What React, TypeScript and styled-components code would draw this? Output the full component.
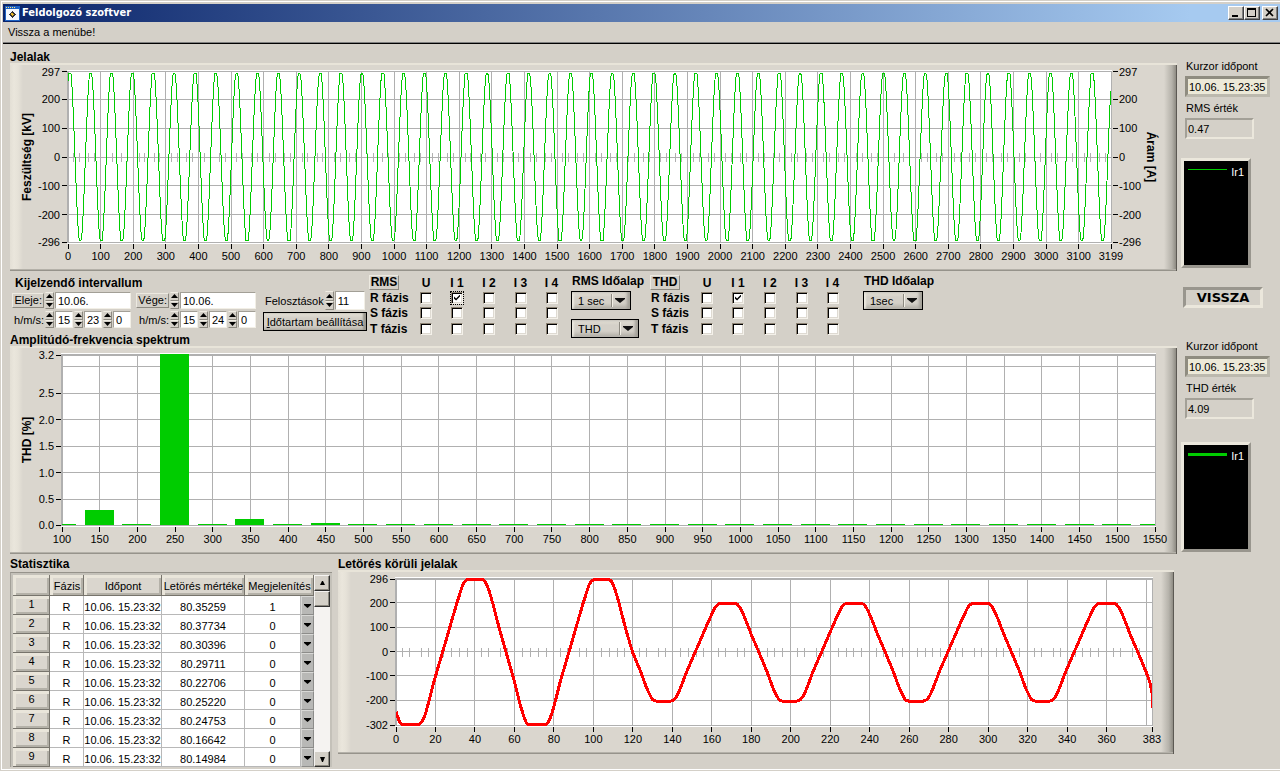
import React, { useId } from "react";
import styled, { createGlobalStyle } from "styled-components";

const face = "#d4d0c8";
const panelFace = "#dad6ce";
const gridGray = "#b0b0b0";
const green = "#00cc00";
const sans = '"Liberation Sans", Arial, sans-serif';

const GlobalStyle = createGlobalStyle`
  * { box-sizing: border-box; }
  body { margin: 0; background: ${face}; color: #000; font: 11px/14px ${sans}; display: flow-root; }
  button, input, select { font: inherit; color: inherit; margin: 0; padding: 0; border-radius: 0; }
`;

/* ---------- window frame ---------- */

const Window = styled.div`
  display: flex;
  flex-direction: column;
  min-height: calc(100vh - 2px);
  margin: 1px 0 1px 1px;
  padding: 2px 0 0 1px;
  border: 1px solid #fff;
  border-right: 0;
`;

const TitleBar = styled.header`
  display: flex;
  align-items: center;
  gap: 2px;
  height: 18px;
  padding: 0 2px;
  background: linear-gradient(to right, #0a246a, #a6caf0 93%);
  color: #fff;
`;

const WindowTitle = styled.h1`
  flex: 1;
  margin: 0;
  font: bold 11px/18px "DejaVu Sans Condensed", "DejaVu Sans", sans-serif;
`;

const WindowButtons = styled.div`
  display: flex;
`;

const WindowButton = styled.button<{ $apart?: boolean }>`
  display: grid;
  place-items: center;
  width: 16px;
  height: 14px;
  margin-left: ${(p) => (p.$apart ? 2 : 0)}px;
  background: ${face};
  border: 1px solid;
  border-color: #fff #404040 #404040 #fff;
  box-shadow: inset -1px -1px #808080;
`;

const MenuBar = styled.nav`
  height: 22px;
  padding: 3px 5px;
  border-bottom: 1px solid #000;
  box-shadow: inset 0 -1px #808080;
`;

const MenuItem = styled.button`
  background: none;
  border: 0;
`;

const Body = styled.main`
  display: flex;
  flex: 1;
  padding-left: 7px;
`;

const MainColumn = styled.div`
  flex: 1;
  min-width: 0;
  padding-top: 7px;
`;

const SideColumn = styled.aside`
  display: flex;
  flex-direction: column;
  align-items: flex-start;
  width: 103px;
  padding: 15px 0 0 4px;
`;

const Heading = styled.h2`
  margin: 0;
  font: bold 12px/12px ${sans};
  white-space: nowrap;
`;

/* ---------- chart ---------- */

const ChartPanel = styled.div<{ $left: number; $right: number }>`
  padding: 8px ${(p) => p.$right}px 28px ${(p) => p.$left}px;
  background:
    linear-gradient(to right, #e3dfd5, #eae6dc 4px, #e6e2d8 8px, ${panelFace}) left / 13px 100% no-repeat,
    linear-gradient(to right, ${panelFace}, #b5b2aa 60%, #85827a) right / 13px 100% no-repeat,
    ${panelFace};
  box-shadow: inset 0 2px #e8e4d9, inset -1px 0 #5c5953, inset 0 -1px #96938b, inset 0 -2px #b4b1a9;
`;

const Plot = styled.svg<{ $height: number }>`
  display: block;
  width: 100%;
  height: ${(p) => p.$height}px;
  overflow: visible;
  background: #fff;
  box-shadow: 0 0 0 1px #fff;
  shape-rendering: crispEdges;
  font: 11px ${sans};
`;

const AxisTitle = styled.text`
  font: bold 12px ${sans};
`;

type Tick = { at: number; label?: string };

type ChartProps = {
  name: string;
  height: number;
  left: number;
  right: number;
  x: [number, number];
  y: [number, number];
  xTicks: Tick[];
  yTicks: Tick[];
  minor?: number[];
  axisTitle?: string;
  rightAxisTitle?: string;
  children: (toX: (v: number) => number, toY: (v: number) => number) => React.ReactNode;
};

function Chart({ name, height, left, right, x, y, xTicks, yTicks, minor = [], axisTitle, rightAxisTitle, children }: ChartProps) {
  const toX = (v: number) => ((v - x[0]) / (x[1] - x[0])) * 100;
  const toY = (v: number) => ((y[1] - v) / (y[1] - y[0])) * height;
  return (
    <ChartPanel $left={left} $right={right}>
      <Plot $height={height} role="img" aria-label={name}>
        <g stroke={gridGray}>
          <line x1="0" x2="100%" y1="0" y2="0" />
          <line x1="-1" x2="-1" y1="0" y2={height} />
          {xTicks.map((t) => (
            <line key={t.at} x1={`${toX(t.at)}%`} x2={`${toX(t.at)}%`} y1="0" y2={height} />
          ))}
          {yTicks.map((t) => (
            <line key={t.at} x1="0" x2="100%" y1={toY(t.at)} y2={toY(t.at)} />
          ))}
          {minor.map((m) => (
            <line key={m} x1={`${toX(m)}%`} x2={`${toX(m)}%`} y1={toY(0) - 4} y2={toY(0) + 5} />
          ))}
        </g>
        {children(toX, toY)}
        {xTicks.filter((t) => t.label !== "").map((t) => (
          <g key={t.at}>
            <line x1={`${toX(t.at)}%`} x2={`${toX(t.at)}%`} y1={height + 1} y2={height + 6} stroke="#000" />
            <text x={`${toX(t.at)}%`} y={height + 17} textAnchor="middle">{t.label ?? t.at}</text>
          </g>
        ))}
        {yTicks.filter((t) => t.label !== "").map((t) => (
          <g key={t.at}>
            <line x1="-6" x2="-1" y1={toY(t.at)} y2={toY(t.at)} stroke="#000" />
            <text x="-8" y={toY(t.at) + 4} textAnchor="end">{t.label ?? t.at}</text>
          </g>
        ))}
        {axisTitle && (
          <AxisTitle textAnchor="middle" transform={`translate(${21 - left},${height / 2}) rotate(-90)`}>
            {axisTitle}
          </AxisTitle>
        )}
        {rightAxisTitle && (
          <svg x="100%" y="0" overflow="visible">
            {yTicks.map((t) => (
              <g key={t.at}>
                <line x1="2" x2="7" y1={toY(t.at)} y2={toY(t.at)} stroke="#000" />
                <text x="8" y={toY(t.at) + 4}>{t.label ?? t.at}</text>
              </g>
            ))}
            <AxisTitle textAnchor="middle" transform={`translate(36,${height / 2}) rotate(90)`}>
              {rightAxisTitle}
            </AxisTitle>
          </svg>
        )}
      </Plot>
    </ChartPanel>
  );
}

type TraceProps = { points: [number, number][]; height: number; color: string; width: number };

function Trace({ points, height, color, width }: TraceProps) {
  return (
    <svg width="100%" height={height} viewBox={`0 0 100 ${height}`} preserveAspectRatio="none">
      <polyline
        points={points.map(([px, py]) => `${px.toFixed(3)},${py.toFixed(2)}`).join(" ")}
        fill="none"
        stroke={color}
        strokeWidth={width}
        strokeLinejoin="round"
        vectorEffect="non-scaling-stroke"
      />
    </svg>
  );
}

/* ---------- chart data ---------- */

const waveTicks: Tick[] = [...Array.from({ length: 32 }, (_, i) => ({ at: i * 100 })), { at: 3199 }];
const waveMinor = Array.from({ length: 32 }, (_, i) => [18, 36, 64, 82].map((m) => i * 100 + m)).flat();
const waveSamples = Array.from({ length: 1067 }, (_, i): [number, number] => {
  const t = i * 3;
  const c = 1.06 * Math.cos(((t - 5.5) / 64) * 2 * Math.PI);
  return [t, Math.max(-1, Math.min(1, c)) * 292];
});

const spectrumTicks: Tick[] = Array.from({ length: 30 }, (_, i) => ({ at: 100 + i * 50 }));
const spectrum = spectrumTicks.map(({ at }) => ({
  freq: at,
  value: ({ 150: 0.3, 250: 3.24, 350: 0.13, 450: 0.04 } as Record<number, number>)[at] ?? 0.02,
}));

// One 64-sample period of the sag waveform: [phase, relative amplitude].
const sagShape: [number, number][] = [
  [0, 0], [3.5, 0.33], [7, 0.66], [9, 0.83], [10.5, 0.95], [12, 0.99], [13.5, 1], [20, 1], [21.5, 0.97], [23, 0.88],
  [25, 0.7], [28.5, 0.33], [32, 0], [36.3, -0.41], [39.2, -0.73], [41, -0.88], [42.2, -0.97], [43.5, -1], [52, -1],
  [53.5, -0.96], [54.8, -0.89], [57, -0.68], [59.5, -0.41], [64, 0],
];
function sagValue(t: number) {
  const phase = (t - 23.7 + 64) % 64;
  const next = sagShape.findIndex(([p]) => p > phase);
  const [p0, v0] = sagShape[next - 1];
  const [p1, v1] = sagShape[next];
  const v = v0 + ((phase - p0) / (p1 - p0)) * (v1 - v0);
  return v * (t < 119.7 ? (v > 0 ? 296 : 300) : v > 0 ? 198 : 203);
}
const sagSamples: [number, number][] = [
  ...Array.from({ length: 383 }, (_, i): [number, number] => [i, sagValue(i)]),
  [383, -170],
  [383, -230],
];
const sagTicks: Tick[] = [...Array.from({ length: 19 }, (_, i) => ({ at: i * 20 })), { at: 380, label: "" }, { at: 383 }];
const sagMinor = Array.from({ length: 19 }, (_, i) =>
  (i % 2 ? [4, 8, 12, 16] : [3.5, 7, 13, 16.5]).map((m) => i * 20 + m),
).flat();

/* ---------- control strip ---------- */

const Controls = styled.section`
  display: flex;
  align-items: flex-start;
  height: 75px;
`;

const IntervalBox = styled.div`
  display: flex;
  flex-direction: column;
  justify-content: space-between;
  align-self: stretch;
  width: 253px;
  padding-top: 6px;
`;

const IntervalHeading = styled(Heading)`
  padding-left: 5px;
`;

const IntervalColumns = styled.div`
  display: flex;
  gap: 7px;
  padding: 0 0 3px 3px;
`;

const TimeColumn = styled.div`
  display: grid;
  grid-template-columns: 31px auto;
  grid-auto-rows: 17px;
  gap: 2px 1px;
  align-items: center;
`;

const Tag = styled.label`
  justify-self: end;
  padding: 0 1px;
  border: 1px solid;
  border-color: #ece9e0 #8c8980 #8c8980 #ece9e0;
  line-height: 13px;
`;

const PlainLabel = styled.span`
  justify-self: end;
  white-space: nowrap;
`;

const FieldRow = styled.div`
  display: flex;
  gap: 1px;
`;

const NumberBox = styled.span`
  display: flex;
  gap: 1px;
`;

const Spin = styled.span<{ $tall?: boolean }>`
  display: grid;
  grid-template-rows: 1fr 1fr;
  width: 9px;
  height: ${(p) => (p.$tall ? 19 : 17)}px;
`;

const SpinButton = styled.button`
  display: grid;
  place-items: center;
  background: ${face};
  border: 1px solid;
  border-color: #f0ede4 #8c8980 #8c8980 #d8d4ca;
`;

const Field = styled.input<{ $w: number; $tall?: boolean }>`
  width: ${(p) => p.$w}px;
  height: ${(p) => (p.$tall ? 19 : 17)}px;
  padding-left: 2px;
  background: #fff;
  border: 1px solid;
  border-color: #a29f96 #f2efe6 #f2efe6 #a29f96;
`;

const SplitBox = styled.div`
  display: flex;
  flex-direction: column;
  gap: 2px;
  width: 104px;
  margin-right: 1px;
  padding-top: 20px;
`;

const SplitRow = styled.div`
  display: flex;
  align-items: center;
  gap: 1px;
  height: 19px;
  padding: 0 6px 0 2px;
`;

const SplitLabel = styled.label`
  flex: 1;
`;

const SetButton = styled.button`
  height: 19px;
  background: linear-gradient(#e6e2d8, ${face} 30%, ${face} 70%, #b8b4ac);
  border: 1px solid #000;
  box-shadow: inset -3px 0 2px #9a978f;
  white-space: nowrap;
`;

const Matrix = styled.table`
  table-layout: fixed;
  width: 199px;
  margin-top: 4px;
  border-collapse: collapse;
  font: bold 12px/14px ${sans};
  th, td { padding: 0; height: 15px; text-align: center; }
  tr:nth-child(n + 3) > * { height: 16px; }
  th:first-child { text-align: left; padding-left: 2px; white-space: nowrap; }
`;

const MatrixCol = styled.col<{ $w: number }>`
  width: ${(p) => p.$w}px;
`;

const MatrixTag = styled.span`
  display: block;
  width: 30px;
  margin-left: -1px;
  border: 1px solid;
  border-color: #ece9e0 #8c8980 #8c8980 #ece9e0;
  line-height: 13px;
  text-align: center;
`;

const Check = styled.input<{ $focused?: boolean }>`
  appearance: none;
  display: block;
  width: 12px;
  height: 12px;
  margin: 0 auto;
  background: #fff;
  border: 1px solid;
  border-color: #8c8273 #f4f1ea #f4f1ea #8c8273;
  box-shadow: inset 1px 1px #000, inset -1px -1px #dedad2;
  outline: ${(p) => (p.$focused ? "1px dotted #000" : "0")};
  &:checked::after {
    content: "";
    display: block;
    width: 6px;
    height: 6px;
    margin: 2px;
    background: #000;
    clip-path: polygon(0 35%, 35% 65%, 100% 0, 100% 35%, 35% 100%, 0 70%);
  }
`;

const ComboBox = styled.div<{ $w: number; $before: number }>`
  display: flex;
  flex-direction: column;
  gap: 4px;
  width: ${(p) => p.$w}px;
  margin-left: ${(p) => p.$before}px;
  padding-top: 4px;
`;

const ComboHeading = styled(Heading)`
  padding-left: 1px;
`;

const Combo = styled.div<{ $w: number; $gap?: boolean }>`
  position: relative;
  width: ${(p) => p.$w}px;
  height: 19px;
  margin-top: ${(p) => (p.$gap ? 5 : 0)}px;
  svg { position: absolute; right: 3px; top: 3px; pointer-events: none; }
`;

const Select = styled.select`
  appearance: none;
  width: 100%;
  height: 19px;
  padding-left: 6px;
  background: linear-gradient(#e4e0d6, ${face} 30%, ${face} 65%, #b0ada5);
  border: 1px solid #000;
  box-shadow: inset -3px 0 3px #a3a098, inset 2px 0 2px #ece9e0;
`;

const phases = ["R fázis", "S fázis", "T fázis"];
const channels = ["U", "I 1", "I 2", "I 3", "I 4"];

function PhaseMatrix({ name, focused }: { name: string; focused?: boolean }) {
  return (
    <Matrix>
      <colgroup>
        {[43, 30, 32, 32, 31, 31].map((w, i) => <MatrixCol key={i} $w={w} />)}
      </colgroup>
      <tbody>
        <tr>
          <th><MatrixTag>{name}</MatrixTag></th>
          {channels.map((c) => <th key={c} scope="col">{c}</th>)}
        </tr>
        {phases.map((p, r) => (
          <tr key={p}>
            <th scope="row">{p}</th>
            {channels.map((c, i) => (
              <td key={c}>
                <Check
                  type="checkbox"
                  aria-label={`${name} ${p} ${c}`}
                  defaultChecked={r === 0 && i === 1}
                  $focused={focused && r === 0 && i === 1}
                />
              </td>
            ))}
          </tr>
        ))}
      </tbody>
    </Matrix>
  );
}

function Dropdown({ name, value, width, gap }: { name: string; value: string; width: number; gap?: boolean }) {
  return (
    <Combo $w={width} $gap={gap}>
      <Select aria-label={name} defaultValue={value}>
        <option>{value}</option>
      </Select>
      <svg width="18" height="13" viewBox="0 0 18 13">
        <path d="M1.5 0v13" stroke="#8c8980" />
        <path d="M2.500 0v13" stroke="#f2efe6" />
        <path d="M5 4h10v1l-5 4-5-4z" fill="#111" />
      </svg>
    </Combo>
  );
}

function NumberField({ id, label, value, width, tall }: { id?: string; label: string; value: string; width: number; tall?: boolean }) {
  return (
    <NumberBox>
      <Spin $tall={tall}>
        <SpinButton type="button" aria-label={`${label} +`}>
          <svg width="7" height="4"><path d="M0 4h7L3.500 0z" /></svg>
        </SpinButton>
        <SpinButton type="button" aria-label={`${label} -`}>
          <svg width="7" height="4"><path d="M0 0h7L3.500 4z" /></svg>
        </SpinButton>
      </Spin>
      <Field id={id} aria-label={label} defaultValue={value} $w={width} $tall={tall} />
    </NumberBox>
  );
}

function TimePicker({ label, date, time }: { label: string; date: string; time: string[] }) {
  const id = useId();
  return (
    <TimeColumn>
      <Tag htmlFor={id}>{label}:</Tag>
      <NumberField id={id} label={label} value={date} width={76} />
      <PlainLabel>h/m/s:</PlainLabel>
      <FieldRow>
        {time.map((t, i) => (
          <NumberField key={i} label={`${label} ${"hms"[i]}`} value={t} width={18} />
        ))}
      </FieldRow>
    </TimeColumn>
  );
}

/* ---------- side column ---------- */

const ReadoutLabel = styled.label`
  margin-left: 5px;
  line-height: 14px;
`;

const Readout = styled.input<{ $cream?: boolean }>`
  width: ${(p) => (p.$cream ? 85 : 69)}px;
  height: 21px;
  margin: 3px 0 4px 4px;
  padding-left: 1px;
  background: ${(p) => (p.$cream ? "#ece9d8" : face)};
  border: ${(p) => (p.$cream ? 3 : 2)}px solid;
  border-color: ${(p) => (p.$cream ? "#8f8c80 #bcb9ae #bcb9ae #8f8c80" : "#a3a097 #ebe7dc #ebe7dc #a3a097")};
`;

const Legend = styled.div<{ $thick?: boolean }>`
  display: flex;
  justify-content: space-between;
  align-items: flex-start;
  width: 70px;
  height: 110px;
  margin-top: ${(p) => (p.$thick ? 19 : 15)}px;
  padding: 4px 4px 0;
  background: #000;
  color: #fff;
  border: 3px solid;
  border-color: #ebe7dc #99968e #99968e #ebe7dc;
`;

const LegendLine = styled.span<{ $thick?: boolean }>`
  width: 39px;
  height: ${(p) => (p.$thick ? 3 : 1)}px;
  margin-top: 4px;
  background: ${green};
`;

const BackButton = styled.button`
  width: 80px;
  height: 21px;
  margin: 19px 0 31px 2px;
  background: ${face};
  border: 3px solid;
  border-color: #99968e #ebe7dc #ebe7dc #99968e;
  font: bold 13px/15px "DejaVu Sans", sans-serif;
`;

function ReadoutGroup({ label, value, thick }: { label: string; value: string; thick?: boolean }) {
  const id = useId();
  return (
    <>
      <ReadoutLabel htmlFor={`${id}t`}>Kurzor időpont</ReadoutLabel>
      <Readout id={`${id}t`} $cream readOnly value="10.06. 15.23:35" />
      <ReadoutLabel htmlFor={`${id}v`}>{label}</ReadoutLabel>
      <Readout id={`${id}v`} readOnly value={value} />
      <Legend $thick={thick}>
        <LegendLine $thick={thick} />
        Ir1
      </Legend>
    </>
  );
}

/* ---------- bottom row ---------- */

const BottomRow = styled.section`
  display: flex;
  align-items: flex-start;
  gap: 6px;
  padding: 4px 3px 0 0;
`;

const StatBox = styled.div`
  display: flex;
  flex-direction: column;
  gap: 2px;
  width: 322px;
`;

const SagBox = styled.div`
  flex: 1;
  min-width: 0;
`;

const StatFrame = styled.div`
  display: flex;
  padding: 2px 2px 0 2px;
  background: #c4c1b9;
  border-top: 1px solid #96938b;
  border-left: 1px solid #a3a098;
`;

const StatTable = styled.table`
  width: 301px;
  table-layout: fixed;
  border-collapse: separate;
  border-spacing: 0;
  background: #fff;
  td, th { padding: 0; height: 19px; font-weight: normal; text-align: center; white-space: nowrap; }
  thead th { height: 21px; }
  th {
    background: ${panelFace};
    box-shadow: inset -1px -1px #77746c, inset 3px 3px #e9e5da, inset -3px -3px #b4b1a8;
  }
  tbody th { line-height: 17px; vertical-align: top; }
  td { border-right: 1px solid #b8b8b8; border-bottom: 1px solid #b8b8b8; vertical-align: bottom; line-height: 14px; }
  td:last-child { border: 0; }
`;

const StatCol = styled.col<{ $w: number }>`
  width: ${(p) => p.$w}px;
`;

const CellButton = styled.button`
  display: grid;
  place-items: center;
  width: 13px;
  height: 19px;
  background: #b8b8b6;
  border: 1px solid;
  border-color: #d8d8d6 #8c8c8a #8c8c8a #d8d8d6;
`;

const ScrollBar = styled.div`
  display: flex;
  flex: none;
  flex-direction: column;
  align-items: center;
  width: 16px;
  background: #f5f3f1;
`;

const ScrollButton = styled.button<{ $end?: boolean }>`
  display: grid;
  place-items: center;
  width: 16px;
  height: 16px;
  margin-top: ${(p) => (p.$end ? "auto" : "0")};
  background: ${face};
  border: 1px solid;
  border-color: #f5f3f1 #303030 #303030 #f5f3f1;
  box-shadow: inset -1px -1px #8c8980;
`;

const stats = ["80.35259", "80.37734", "80.30396", "80.29711", "80.22706", "80.25220", "80.24753", "80.16642", "80.14984"];

function Statistics() {
  return (
    <StatFrame>
      <StatTable>
        <colgroup>
          {[37, 34, 78, 83, 56, 13].map((w, i) => <StatCol key={i} $w={w} />)}
        </colgroup>
        <thead>
          <tr>
            <th />
            <th scope="col">Fázis</th>
            <th scope="col">Időpont</th>
            <th scope="col">Letörés mértéke</th>
            <th scope="col" colSpan={2}>Megjelenítés</th>
          </tr>
        </thead>
        <tbody>
          {stats.map((s, i) => (
            <tr key={s}>
              <th scope="row">{i + 1}</th>
              <td>R</td>
              <td>10.06. 15.23:32</td>
              <td>{s}</td>
              <td>{i === 0 ? 1 : 0}</td>
              <td>
                <CellButton type="button" aria-label={`Megjelenítés ${i + 1}`}>
                  <svg width="7" height="4"><path d="M0 0h7v1L3.500 4 0 1z" /></svg>
                </CellButton>
              </td>
            </tr>
          ))}
        </tbody>
      </StatTable>
      <ScrollBar>
        <ScrollButton type="button" aria-label="Fel"><svg width="5" height="5"><path d="M2 0h1l2 4H0z" /></svg></ScrollButton>
        <ScrollButton type="button" aria-label="Görgetés" />
        <ScrollButton type="button" aria-label="Le" $end><svg width="5" height="5"><path d="M0 0h5L3 5H2z" /></svg></ScrollButton>
      </ScrollBar>
    </StatFrame>
  );
}

export default function App() {
  return (
    <>
      <GlobalStyle />
      <Window>
        <TitleBar>
          <svg width="15" height="15" viewBox="0 0 15 15" shapeRendering="crispEdges">
            <path d="M0 0h15v15H0z" fill="#1c62c4" />
            <path d="M1 3h13v11H1z" fill="#f4f8ff" />
            <path d="M1 1h1v1H1zM3 1h1v1H3zM5 1h1v1H5zM7 1h1v1H7zM9 1h1v1H9z" fill="#ffe680" />
            <path d="M7 5h1v1h1v1h1v1h1v1h-1v1H9v1H8v1H7v-1H6v-1H5V9H4V8h1V7h1V6h1z" fill="#333" />
            <path d="M6 7h2v1h1v1H8v1H7V9H6z" fill="#e8b828" />
          </svg>
          <WindowTitle>Feldolgozó szoftver</WindowTitle>
          <WindowButtons>
            <WindowButton type="button" aria-label="Kis méret">
              <svg width="12" height="10" shapeRendering="crispEdges"><path d="M2 7h6v2H2z" /></svg>
            </WindowButton>
            <WindowButton type="button" aria-label="Teljes méret">
              <svg width="12" height="10" shapeRendering="crispEdges"><path d="M1 0h9v9H1zM2 2v6h7V2z" fillRule="evenodd" /></svg>
            </WindowButton>
            <WindowButton type="button" aria-label="Bezárás" $apart>
              <svg width="12" height="10"><path d="M2 1l7 7M9 1L2 8" stroke="#000" strokeWidth="1.600" /></svg>
            </WindowButton>
          </WindowButtons>
        </TitleBar>
        <MenuBar>
          <MenuItem type="button">Vissza a menübe!</MenuItem>
        </MenuBar>
        <Body>
          <MainColumn>
            <Heading>Jelalak</Heading>
            <Chart
              name="Jelalak" height={172} left={58} right={66} x={[0, 3199]} y={[-299, 299]}
              xTicks={waveTicks} yTicks={[297, 200, 100, 0, -100, -200, -296].map((at) => ({ at }))}
              minor={waveMinor} axisTitle="Feszültség [kV]" rightAxisTitle="Áram [A]"
            >
              {(toX, toY) => (
                <Trace points={waveSamples.map(([t, v]) => [toX(t), toY(v)])} height={172} color={green} width={1} />
              )}
            </Chart>

            <Controls>
              <IntervalBox>
                <IntervalHeading>Kijelzendő intervallum</IntervalHeading>
                <IntervalColumns>
                  <TimePicker label="Eleje" date="10.06." time={["15", "23", "0"]} />
                  <TimePicker label="Vége" date="10.06." time={["15", "24", "0"]} />
                </IntervalColumns>
                <Heading>Amplitúdó-frekvencia spektrum</Heading>
              </IntervalBox>
              <SplitBox>
                <SplitRow>
                  <SplitLabel htmlFor="split">Felosztások</SplitLabel>
                  <NumberField id="split" label="Felosztások" value="11" width={30} tall />
                </SplitRow>
                <SetButton type="button"><u>I</u>dőtartam beállítása</SetButton>
              </SplitBox>
              <PhaseMatrix name="RMS" focused />
              <ComboBox $w={78} $before={4}>
                <ComboHeading>RMS Időalap</ComboHeading>
                <Dropdown name="RMS Időalap" value="1 sec" width={60} />
                <Dropdown name="Jel" value="THD" width={68} gap />
              </ComboBox>
              <PhaseMatrix name="THD" />
              <ComboBox $w={90} $before={15}>
                <ComboHeading>THD Időalap</ComboHeading>
                <Dropdown name="THD Időalap" value="1sec" width={60} />
              </ComboBox>
            </Controls>

            <Chart
              name="Amplitúdó-frekvencia spektrum" height={172} left={52} right={22} x={[100, 1550]} y={[-0.01, 3.24]}
              xTicks={spectrumTicks}
              yTicks={[{ at: 3.22, label: "3.2" }, { at: 3, label: "" }, ...[2.5, 2, 1.5, 1, 0.5, 0].map((at) => ({ at, label: at.toFixed(1) }))]}
              axisTitle="THD [%]"
            >
              {(toX, toY) => (
                <svg width="100%" height={172}>
                  {spectrum.map(({ freq, value }) => (
                    <rect key={freq} x={`${toX(freq - 20)}%`} width={`${toX(138.5)}%`} y={toY(value)} height={toY(0) - toY(value)} fill={green} />
                  ))}
                </svg>
              )}
            </Chart>

            <BottomRow>
              <StatBox>
                <Heading>Statisztika</Heading>
                <Statistics />
              </StatBox>
              <SagBox>
                <Heading>Letörés körüli jelalak</Heading>
                <Chart
                  name="Letörés körüli jelalak" height={148} left={58} right={22} x={[0, 383]} y={[-305, 301]}
                  xTicks={sagTicks} yTicks={[296, 200, 100, 0, -100, -200, -302].map((at) => ({ at }))}
                  minor={sagMinor}
                >
                  {(toX, toY) => (
                    <Trace points={sagSamples.map(([t, v]) => [toX(t), toY(v)])} height={148} color="#ff0000" width={3} />
                  )}
                </Chart>
              </SagBox>
            </BottomRow>
          </MainColumn>

          <SideColumn>
            <ReadoutGroup label="RMS érték" value="0.47" />
            <BackButton type="button">VISSZA</BackButton>
            <ReadoutGroup label="THD érték" value="4.09" thick />
          </SideColumn>
        </Body>
      </Window>
    </>
  );
}
